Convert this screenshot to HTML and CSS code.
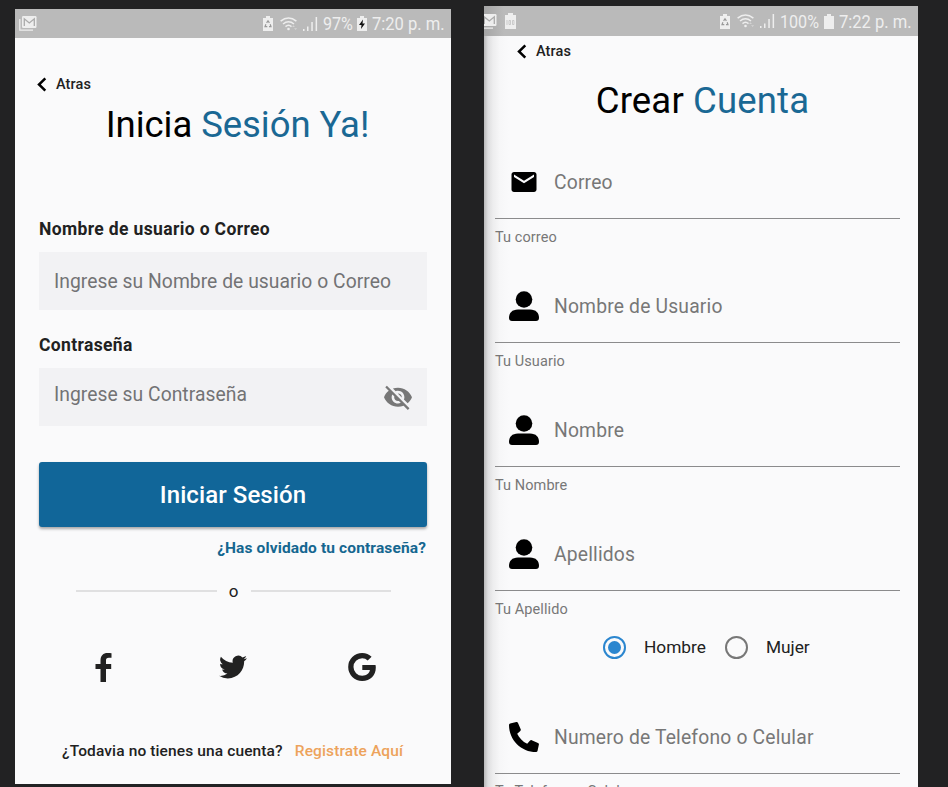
FILE: index.html
```html
<!DOCTYPE html>
<html lang="es">
<head>
<meta charset="utf-8">
<title>Inicia Sesión</title>
<link rel="stylesheet" href="styles.css">
</head>
<body>
<svg width="0" height="0" class="defs">
  <symbol id="back" viewBox="0 0 10 15"><path d="M8.3 1.3 2 7.5l6.3 6.2" fill="none" stroke="currentColor" stroke-width="2.5"/></symbol>
  <symbol id="gallery" viewBox="0 0 18 15"><path d="M.8 3v11.2H14" fill="none" stroke="currentColor" stroke-width="1.3"/><rect x="3" y="0" width="14.5" height="12" rx="1.2" fill="currentColor"/><path d="M5.3 10V2.8l5 4.2 5-4.2V10" fill="none" stroke="#aaa" stroke-width="1.3"/></symbol>
  <symbol id="saver" viewBox="0 0 10 15"><path d="M3 0h4v2h3v13H0V2h3z" fill="currentColor"/><path d="M3.600 6.800 5 4.800l1.400 2M7.200 8.300l.8 2.400H6M4.300 10.700H2l.9-2.400" fill="none" stroke="#999" stroke-width="1.2"/></symbol>
  <symbol id="wifi" viewBox="0 0 18 14"><g fill="none" stroke="currentColor" stroke-width="1.5"><path d="M.6 4.2Q8.500-2 16.400 4.200"/><path d="M3 7Q8.500 2.500 14 7"/><path d="M5.500 9.600Q8.500 7 11.500 9.600"/></g><circle cx="8.500" cy="12" r="1.300" fill="currentColor"/><path d="m12 10 1.500-1.800L15 10zm2 1.200h3.200L15.600 13z" fill="currentColor" opacity=".5"/></symbol>
  <symbol id="signal" viewBox="0 0 15 14"><path d="M0 12h1.500v2H0zM4 9.500h1.500V14H4zM8.300 5h1.500v9H8.300zM12.600 0h1.500v14h-1.500z" fill="currentColor"/></symbol>
  <symbol id="battery" viewBox="0 0 10 15"><path d="M3 0h4v2h3v13H0V2h3z" fill="currentColor"/></symbol>
  <symbol id="user" viewBox="0 0 30 30"><circle cx="15" cy="8.500" r="8.300"/><path d="M9 18.500h12c6 0 9 3.500 9 8.500 0 2-1.200 3-3 3H3c-1.800 0-3-1-3-3 0-5 3-8.500 9-8.500z"/></symbol>
</svg>
<main class="screens">
  <section class="phone login">
    <header class="status">
      <svg class="gallery"><use href="#gallery"/></svg>
      <svg class="cell saver"><use href="#saver"/></svg>
      <svg class="wifi"><use href="#wifi"/></svg>
      <svg class="signal"><use href="#signal"/></svg>
      <span class="percent"><span class="narrow">97%</span></span>
      <svg class="cell battery" viewBox="0 0 10 15"><path d="M3 0h4v2h3v13H0V2h3z" fill="currentColor"/><path d="M6 3.500 2 9h2.500L4 13l4-5.500H5.500z" fill="#111"/></svg>
      <span class="clock"><span class="narrow">7:20 p. m.</span></span>
    </header>
    <a class="back"><svg><use href="#back"/></svg><span>Atras</span></a>
    <h1>Inicia <b>Sesión Ya!</b></h1>
    <form class="login-form">
      <label>Nombre de usuario o Correo</label>
      <div class="box"><span>Ingrese su Nombre de usuario o Correo</span></div>
      <label>Contraseña</label>
      <div class="box password"><span>Ingrese su Contraseña</span>
        <svg class="eye" viewBox="1 2.500 22 19.500"><path d="M12 7c2.760 0 5 2.240 5 5 0 .65-.13 1.260-.36 1.830l2.920 2.920c1.510-1.260 2.700-2.890 3.430-4.750-1.730-4.390-6-7.500-11-7.500-1.400 0-2.740.25-3.980.7l2.160 2.160C10.740 7.130 11.350 7 12 7zM2 4.270l2.280 2.280.46.46C3.080 8.300 1.780 10.020 1 12c1.730 4.390 6 7.500 11 7.500 1.550 0 3.030-.3 4.380-.84l.42.42L19.730 22 21 20.730 3.270 3 2 4.270zM7.530 9.800l1.550 1.550c-.05.21-.08.43-.08.65 0 1.660 1.340 3 3 3 .22 0 .44-.03.65-.08l1.550 1.550c-.67.33-1.410.53-2.200.53-2.760 0-5-2.240-5-5 0-.79.2-1.530.53-2.200zm4.310-.78 3.150 3.150.02-.16c0-1.660-1.340-3-3-3l-.17.01z"/></svg>
      </div>
      <div class="submit">Iniciar Sesión</div>
    </form>
    <a class="forgot">¿Has olvidado tu contraseña?</a>
    <div class="divider"><i></i><span>o</span><i></i></div>
    <div class="social">
      <svg class="facebook" viewBox="0 0 16 29"><path d="M5 29V16H0v-5h5V7.500C5 2.500 7.800 0 12 0c1.600 0 3 .1 4 .3v4.500h-2.600c-2.300 0-2.900 1-2.900 2.700V11h5.200v5h-5.200v13z"/></svg>
      <svg class="twitter" viewBox="0 2 24 20"><path d="M23.950 4.570a10 10 0 0 1-2.820.77 4.960 4.960 0 0 0 2.160-2.720c-.95.560-2 .960-3.130 1.190a4.920 4.920 0 0 0-8.380 4.480A13.930 13.930 0 0 1 1.640 3.160a4.920 4.920 0 0 0 1.520 6.570 4.900 4.900 0 0 1-2.230-.61v.06a4.920 4.920 0 0 0 3.950 4.830 5 5 0 0 1-2.210.08 4.940 4.940 0 0 0 4.600 3.420A9.870 9.870 0 0 1 0 19.540a14 14 0 0 0 7.550 2.210c9.050 0 14-7.500 14-13.980 0-.21 0-.42-.02-.63a9.940 9.940 0 0 0 2.420-2.570z"/></svg>
      <svg class="google" viewBox="0 0 28 28"><path d="M14.300 12h13.200c.2.800.3 1.600.3 2.500C27.800 22.500 22.400 28 14.200 28a14 14 0 1 1 0-28c3.800 0 7 1.400 9.400 3.700l-3.900 3.800A7.900 7.900 0 0 0 14.200 5.300a8.700 8.700 0 1 0 0 17.400c4.500 0 7.200-2.500 7.700-5.700h-7.600z"/></svg>
    </div>
    <p class="join"><span>¿Todavia no tienes una cuenta?</span><a>Registrate Aquí</a></p>
  </section>
  <section class="phone register">
    <header class="status">
      <svg class="gallery"><use href="#gallery"/></svg>
      <svg class="full" viewBox="0 0 11 16"><path d="M3 0h5v2h3v14H0V2h3z" fill="currentColor"/><path d="M2 7v5M4 7.500h1.500v4H4zM7.500 7.500H9v4H7.500z" fill="none" stroke="#bbb" stroke-width=".7"/></svg>
      <svg class="cell saver"><use href="#saver"/></svg>
      <svg class="wifi"><use href="#wifi"/></svg>
      <svg class="signal"><use href="#signal"/></svg>
      <span class="percent"><span class="narrow">100%</span></span>
      <svg class="cell battery"><use href="#battery"/></svg>
      <span class="clock"><span class="narrow">7:22 p. m.</span></span>
    </header>
    <a class="back"><svg><use href="#back"/></svg><span>Atras</span></a>
    <h1>Crear <b>Cuenta</b></h1>
    <form class="register-form">
      <div class="field"><svg class="mail" viewBox="2 4 20 16"><path d="M20 4H4c-1.100 0-2 .9-2 2v12c0 1.100.9 2 2 2h16c1.100 0 2-.9 2-2V6c0-1.100-.9-2-2-2zm0 4-8 5-8-5V6l8 5 8-5z"/></svg><span>Correo</span></div>
      <small>Tu correo</small>
      <div class="field"><svg class="user"><use href="#user"/></svg><span>Nombre de Usuario</span></div>
      <small>Tu Usuario</small>
      <div class="field"><svg class="user"><use href="#user"/></svg><span>Nombre</span></div>
      <small>Tu Nombre</small>
      <div class="field"><svg class="user"><use href="#user"/></svg><span>Apellidos</span></div>
      <small>Tu Apellido</small>
      <div class="radios"><i class="radio on"></i><span class="man">Hombre</span><i class="radio"></i><span>Mujer</span></div>
      <div class="field"><svg class="phone-icon" viewBox="0 0 30 30"><path d="M1.100 1.500 7.300.1c.8-.2 1.400.2 1.700.9l2.700 6.300c.3.600.1 1.200-.4 1.600L8.200 11.800c2 4.300 5.500 7.900 10 10l2.900-3.200c.4-.5 1-.7 1.600-.4l6.300 2.700c.7.300 1.100 1 .9 1.700l-1.400 6.300c-.2.700-.7 1.100-1.400 1.100C12.200 30 0 17.900 0 2.900c0-.7.400-1.200 1.100-1.400z"/></svg><span>Numero de Telefono o Celular</span></div>
      <small class="cut">Tu Telefono o Celular</small>
    </form>
  </section>
</main>
</body>
</html>
```
FILE: styles.css
```css
* { box-sizing: border-box; }
body { margin: 0; background: #222223; font-family: Roboto, sans-serif; color: #212121; height: 787px; overflow: hidden; }
.defs { display: block; position: absolute; }
svg { fill: currentColor; flex: none; display: block; }
.screens { display: flex; height: 787px; overflow: hidden; }
.phone { background: #fafafb; overflow: hidden; flex: none; }
.login { width: 436px; height: 775px; margin: 9px 33px 0 15px; }
.register { width: 434px; height: 781px; margin-top: 6px; background: linear-gradient(90deg, #b9b9ba 0, #dededf 4px, #ededee 9px, #f7f7f8 16px, #fafafb 25px); }

.status { height: 29px; background: #bababa; color: #eee; display: flex; align-items: center; padding: 0 6px 0 4px; }
.status .gallery { width: 18px; height: 15px; margin-right: auto; }
.cell { width: 10px; height: 15px; }
.wifi { width: 18px; height: 14px; margin-left: 7px; }
.signal { width: 15px; height: 14px; margin-left: 5px; }
.percent { width: 29px; margin-left: 5px; }
.clock { width: 73px; margin-left: 5px; }
.percent, .clock { line-height: 30px; font-size: 18.500px; white-space: nowrap; }
.battery { margin-left: 5px; }
.narrow { display: inline-block; transform-origin: left center; transform: scaleX(.87); }
.clock .narrow { transform: scaleX(.895); }
.register .status { height: 30px; padding-left: 0; padding-right: 7px; background: linear-gradient(90deg, #a5a5a5, #bababa 20px); }
.register .status .narrow { padding-top: 1px; }
.register .gallery { width: 18px; margin: 0 8px 0 -5px; }
.full { width: 11px; height: 16px; margin-right: auto; }
.register .percent { width: 39px; }
.register .clock { width: 72px; }

.back { display: flex; align-items: center; font-size: 14.500px; font-weight: 500; letter-spacing: .1px; height: 20px; }
.back svg { width: 10px; height: 15px; margin-right: 9px; color: #000; }
.login .back { margin: 36px 0 0 22px; }
.register .back { margin: 5px 0 0 33px; }
h1 { margin: 0; font-size: 36.500px; font-weight: 400; color: #000; text-align: center; line-height: 44px; white-space: nowrap; }
h1 b { font-weight: 400; color: #1a6894; }
.login h1 { margin: 9px 0 0 9px; letter-spacing: -.06px; }
.register h1 { margin: 18px 0 0 3px; letter-spacing: .15px; }

.login-form { margin: 71px 24px 0; }
label { display: block; font-size: 17.500px; font-weight: 700; letter-spacing: .36px; line-height: 22px; white-space: nowrap; }
.box { background: #f2f2f4; height: 58px; margin: 12px 0 24px; padding: 0 15px; display: flex; align-items: center; justify-content: space-between; font-size: 19.300px; letter-spacing: .04px; color: #737374; white-space: nowrap; }
.password { margin-bottom: 36px; }
.password span { margin-top: -5px; }
.eye { width: 28px; height: 25px; fill: #777; }
.submit { height: 65px; border-radius: 3px; background: #116699; color: #fff; font-size: 24px; font-weight: 500; letter-spacing: .08px; line-height: 66px; text-align: center; box-shadow: 0 2px 3px #0005; }
.forgot { display: block; margin: 11px 25px 0; line-height: 20px; text-align: right; font-size: 15.500px; font-weight: 700; letter-spacing: .13px; color: #156790; }
.divider { display: flex; align-items: center; height: 24px; margin: 21px 60px 0 61px; font-size: 17px; }
.divider i { flex: 1; height: 2px; background: #e0e0e1; margin-bottom: 1px; }
.divider span { width: 34px; text-align: center; line-height: 24px; }
.social { display: flex; align-items: center; justify-content: space-between; height: 40px; margin: 44px 75px 0 80px; color: #212121; }
.facebook { width: 17px; height: 29px; }
.twitter { width: 28px; height: 24px; margin-left: 5px; }
.google { width: 28px; height: 28px; }
.join { display: flex; margin: 54px 0 0 47px; font-size: 15.500px; font-weight: 500; letter-spacing: .12px; line-height: 20px; white-space: nowrap; }
.join a { color: #eda35b; margin-left: 12px; }

.register-form { margin: 19px 18px 0 11px; white-space: nowrap; }
.field { height: 77px; border-bottom: 1px solid #8b8b8c; display: flex; align-items: center; font-size: 19.300px; letter-spacing: .18px; color: #777; padding: 0 0 0 14px; }
.field svg { width: 30px; height: 30px; margin: 3px 15px 0 0; color: #000; }
.field span { margin-top: 4px; }
.field .mail { width: 26px; height: 20px; margin: 4px 17px 0 2px; }
small { display: block; height: 47px; padding-top: 9px; font-size: 14.500px; letter-spacing: .08px; line-height: 20px; color: #777; }
small.cut { padding-top: 8px; }
.radios { display: flex; align-items: center; height: 24px; margin: -3px 0 38px 108px; font-size: 17.300px; }
.radio { width: 23px; height: 23px; border: 2.500px solid #777; border-radius: 50%; margin-right: 18px; }
.on { border-color: #2b86cf; padding: 3px; background: #2b86cf content-box; }
.man { margin-right: 19px; }
```
